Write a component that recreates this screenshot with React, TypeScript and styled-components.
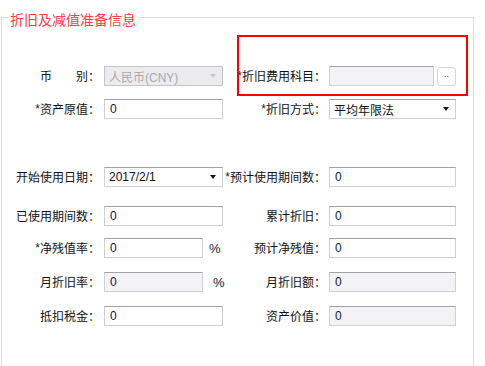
import React from 'react';
import styled, { createGlobalStyle } from 'styled-components';

const GlobalStyle = createGlobalStyle`
  body {
    margin: 0;
    background: #fff;
    font-family: "Liberation Sans", "Noto Sans CJK SC", sans-serif;
  }
`;

const Page = styled.div`
  position: relative;
  width: 485px;
  height: 366px;
  overflow: hidden;
  padding-top: 5px;
  box-sizing: border-box;
`;

const Fieldset = styled.fieldset`
  margin: 0 0 0 1px;
  padding: 0;
  width: 473px;
  height: 400px;
  box-sizing: border-box;
  border: 1px solid #dcdcdc;
  min-width: 0;
`;

const Legend = styled.legend`
  margin-left: 6px;
  padding: 4px 2px 0;
  font-size: 14px;
  line-height: 20px;
  color: #ff3b45;
  font-family: "Noto Sans CJK SC", sans-serif;
`;

const Body = styled.div`
  padding-top: 37px;
`;

type RowProps = { $top: number };

const Row = styled.div<RowProps>`
  display: grid;
  grid-template-columns: 98px 126px 100px 1fr;
  align-items: center;
  height: 20px;
  margin-top: ${(p) => p.$top}px;
`;

const Label = styled.div`
  display: flex;
  justify-content: flex-end;
  white-space: nowrap;
  font-size: 12px;
  line-height: 20px;
  color: #111;
  font-family: "Noto Sans CJK SC", sans-serif;
`;

const Star = styled.span`
  color: #1a1a2a;
  font-family: "Liberation Sans", sans-serif;
  font-size: 12px;
`;

type CellProps = { $pad: number };

const Cell = styled.div<CellProps>`
  display: flex;
  align-items: center;
  padding-left: ${(p) => p.$pad}px;
`;

type BoxProps = { $w: number; $disabled?: boolean };

const Input = styled.input<BoxProps>`
  width: ${(p) => p.$w}px;
  height: 20px;
  box-sizing: border-box;
  margin: 0;
  padding: 0 5px;
  border: 1px solid #cfcfd6;
  border-top-color: #a2a2aa;
  background: ${(p) => (p.$disabled ? '#f3f3f6' : '#fff')};
  font-family: "Liberation Sans", "Noto Sans CJK SC", sans-serif;
  font-size: 12px;
  color: #14143c;
  outline: none;
`;

const Select = styled.div<BoxProps>`
  width: ${(p) => p.$w}px;
  height: 20px;
  box-sizing: border-box;
  display: flex;
  align-items: center;
  justify-content: space-between;
  padding: 0 4px 0 4px;
  border: 1px solid ${(p) => (p.$disabled ? '#c4c4cc' : '#cfcfd6')};
  border-top-color: ${(p) => (p.$disabled ? '#c4c4cc' : '#a2a2aa')};
  background: ${(p) => (p.$disabled ? '#ececef' : '#fff')};
  color: ${(p) => (p.$disabled ? '#a8a8ae' : '#111')};
  font-size: 12px;
  font-family: "Liberation Sans", "Noto Sans CJK SC", sans-serif;
`;

type ArrowProps = { $disabled?: boolean };

const Arrow = styled.span<ArrowProps>`
  width: 0;
  height: 0;
  border-left: 3.5px solid transparent;
  border-right: 3.5px solid transparent;
  border-top: 4px solid ${(p) => (p.$disabled ? '#c8c8cc' : '#1a1a1a')};
  margin-right: 2px;
`;

type SuffixProps = { $gap: number };

const Suffix = styled.span<SuffixProps>`
  margin-left: ${(p) => p.$gap}px;
  font-size: 13px;
  color: #1a1a2a;
`;

const DotsButton = styled.button`
  width: 19px;
  height: 19px;
  margin: 0 0 0 3px;
  padding: 0 0 4px;
  box-sizing: border-box;
  border: 1px solid #d6d6d6;
  border-radius: 3px;
  background: #fff;
  font-size: 9px;
  line-height: 10px;
  color: #333;
  letter-spacing: 0;
`;

const Highlight = styled.div`
  position: absolute;
  left: 237px;
  top: 35px;
  width: 231px;
  height: 61px;
  box-sizing: border-box;
  border: 2px solid #ff0000;
  pointer-events: none;
`;

const L = ({ text, required }: { text: string; required?: boolean }) => (
  <Label>
    {required && <Star>*</Star>}
    {text}
  </Label>
);

export default function App() {
  return (
    <Page>
      <GlobalStyle />
      <Fieldset>
        <Legend>折旧及减值准备信息</Legend>
        <Body>
          <Row $top={0}>
            <L text="币　　别：" />
            <Cell $pad={4}>
              <Select $w={119} $disabled>
                <span>人民币(CNY)</span>
                <Arrow $disabled />
              </Select>
            </Cell>
            <L text="折旧费用科目：" required />
            <Cell $pad={3}>
              <Input $w={105} $disabled readOnly defaultValue="" />
              <DotsButton>..</DotsButton>
            </Cell>
          </Row>
          <Row $top={13}>
            <L text="资产原值：" required />
            <Cell $pad={4}>
              <Input $w={119} readOnly defaultValue="0" />
            </Cell>
            <L text="折旧方式：" required />
            <Cell $pad={3}>
              <Select $w={127}>
                <span>平均年限法</span>
                <Arrow />
              </Select>
            </Cell>
          </Row>
          <Row $top={48}>
            <L text="开始使用日期：" />
            <Cell $pad={4}>
              <Select $w={119}>
                <span>2017/2/1</span>
                <Arrow />
              </Select>
            </Cell>
            <L text="预计使用期间数：" required />
            <Cell $pad={3}>
              <Input $w={127} readOnly defaultValue="0" />
            </Cell>
          </Row>
          <Row $top={19}>
            <L text="已使用期间数：" />
            <Cell $pad={4}>
              <Input $w={119} readOnly defaultValue="0" />
            </Cell>
            <L text="累计折旧：" />
            <Cell $pad={3}>
              <Input $w={127} readOnly defaultValue="0" />
            </Cell>
          </Row>
          <Row $top={12}>
            <L text="净残值率：" required />
            <Cell $pad={4}>
              <Input $w={99} readOnly defaultValue="0" />
              <Suffix $gap={6}>%</Suffix>
            </Cell>
            <L text="预计净残值：" />
            <Cell $pad={3}>
              <Input $w={127} readOnly defaultValue="0" />
            </Cell>
          </Row>
          <Row $top={14}>
            <L text="月折旧率：" />
            <Cell $pad={4}>
              <Input $w={99} $disabled readOnly defaultValue="0" />
              <Suffix $gap={10}>%</Suffix>
            </Cell>
            <L text="月折旧额：" />
            <Cell $pad={3}>
              <Input $w={127} $disabled readOnly defaultValue="0" />
            </Cell>
          </Row>
          <Row $top={14}>
            <L text="抵扣税金：" />
            <Cell $pad={4}>
              <Input $w={119} readOnly defaultValue="0" />
            </Cell>
            <L text="资产价值：" />
            <Cell $pad={3}>
              <Input $w={127} $disabled readOnly defaultValue="0" />
            </Cell>
          </Row>
        </Body>
      </Fieldset>
      <Highlight />
    </Page>
  );
}
